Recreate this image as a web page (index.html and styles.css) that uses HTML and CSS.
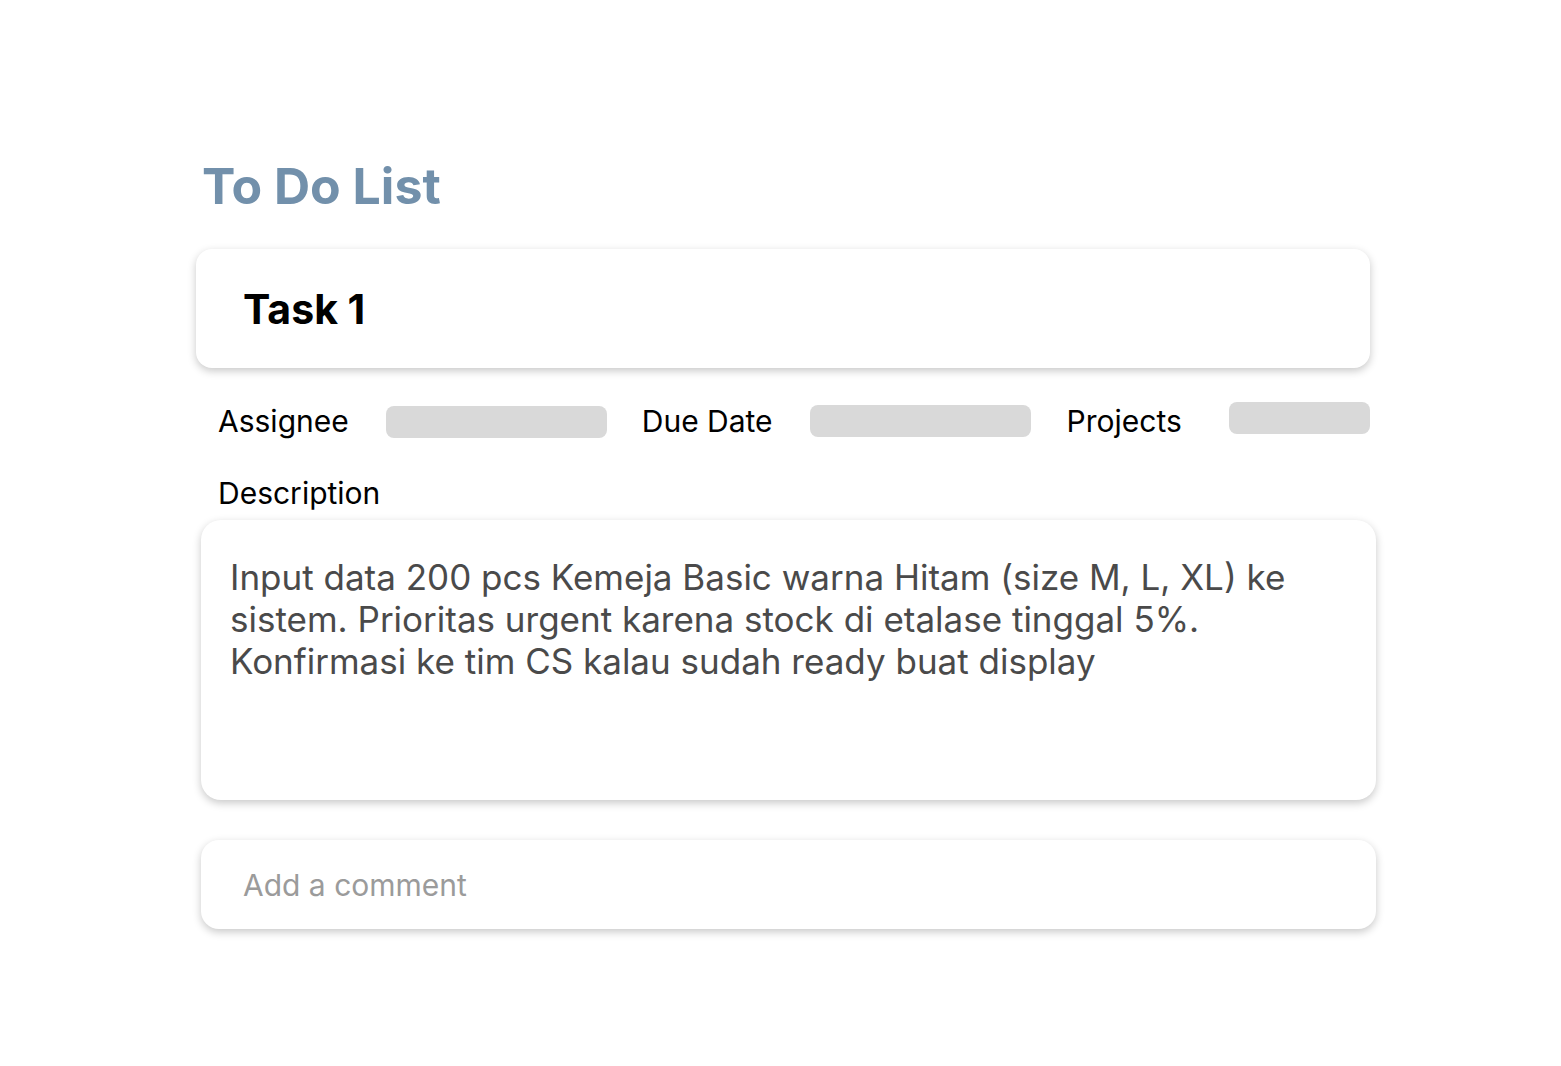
FILE: index.html
```html
<!DOCTYPE html>
<html>
<head>
<meta charset="utf-8">
<link rel="stylesheet" href="styles.css">
</head>
<body>
<main class="page">
  <h1 class="title">To Do List</h1>
  <section class="task-card">
    <h2 class="task-name">Task 1</h2>
  </section>
  <div class="meta-row">
    <span class="meta-label">Assignee</span>
    <span class="meta-bar bar-assignee"></span>
    <span class="meta-label label-due">Due Date</span>
    <span class="meta-bar bar-due"></span>
    <span class="meta-label label-projects">Projects</span>
    <span class="meta-bar bar-projects"></span>
  </div>
  <div class="desc-label">Description</div>
  <section class="desc-card">
    <p class="desc-text">Input data 200 pcs Kemeja Basic warna Hitam (size M, L, XL) ke sistem. Prioritas urgent karena stock di etalase tinggal 5%. Konfirmasi ke tim CS kalau sudah ready buat display</p>
  </section>
  <section class="comment-card">
    <span class="comment-placeholder">Add a comment</span>
  </section>
</main>
</body>
</html>
```

FILE: styles.css
```css
* { box-sizing: border-box; }
html, body {
  margin: 0;
  padding: 0;
  background: #ffffff;
}
body {
  font-family: Inter, "Noto Sans", "Liberation Sans", sans-serif;
  color: #000;
  min-height: 1066px;
}
.page {
  width: 1561px;
  padding: 0 185px 120px 196px;
}
.title {
  margin: 0;
  padding-top: 156px;
  padding-left: 6px;
  font-size: 50px;
  line-height: 60px;
  font-weight: 700;
  color: #7290ab;
}
.task-card {
  margin-top: 33px;
  width: 1174px;
  height: 119px;
  background: #fff;
  border-radius: 16px;
  box-shadow: 0 3px 8px rgba(0,0,0,0.22);
  display: flex;
  align-items: center;
  padding-left: 47px;
}
.task-name {
  margin: 0;
  font-size: 41px;
  font-weight: 700;
}
.meta-row {
  display: flex;
  align-items: flex-start;
  width: 1174px;
  margin-top: 35px;
  padding-left: 22px;
  height: 44px;
}
.meta-label {
  font-size: 30px;
  line-height: 36px;
  font-weight: 400;
}
.meta-bar {
  display: block;
  width: 221px;
  height: 32px;
  background: #d9d9d9;
  border-radius: 8px;
}
.bar-assignee { margin-left: 37px; margin-top: 3px; }
.label-due { margin-left: 35px; }
.bar-due { margin-left: 37px; margin-top: 2px; }
.label-projects { margin-left: 36px; }
.bar-projects { margin-left: auto; width: 141px; margin-top: -1px; }
.desc-label {
  margin-top: 28px;
  padding-left: 22px;
  font-size: 30px;
  line-height: 36px;
}
.desc-card {
  margin-top: 9px;
  margin-left: 5px;
  width: 1175px;
  height: 280px;
  background: #fff;
  border-radius: 20px;
  box-shadow: 0 3px 8px rgba(0,0,0,0.22);
  padding: 36px 40px 0 29px;
}
.desc-text {
  margin: 0;
  font-size: 35px;
  line-height: 42px;
  color: #4a4a4a;
}
.comment-card {
  margin-top: 40px;
  margin-left: 5px;
  width: 1175px;
  height: 89px;
  background: #fff;
  border-radius: 18px;
  box-shadow: 0 3px 8px rgba(0,0,0,0.22);
  display: flex;
  align-items: center;
  padding-left: 42px;
}
.comment-placeholder {
  font-size: 30px;
  color: #9b9b9b;
}
```
